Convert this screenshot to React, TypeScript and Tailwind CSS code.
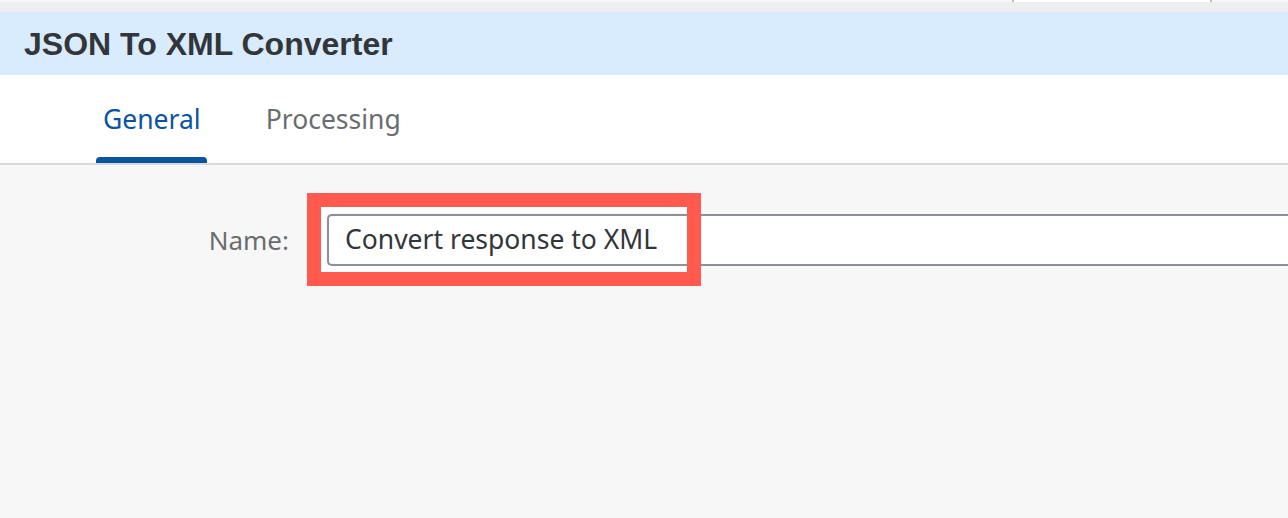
import React from "react";

const tabs = [
  { label: "General", active: true },
  { label: "Processing", active: false },
];

export default function App() {
  return (
    <div className="w-[1288px] h-[518px] overflow-hidden bg-[#f7f7f7] flex flex-col" style={{ fontFamily: '"Noto Sans", "Open Sans", sans-serif' }}>
      {/* browser strip */}
      <div className="h-[12px] bg-[#edeef0] flex flex-col shrink-0">
        <div className="h-[2px] bg-[#f6f6f7] flex">
          <div className="ml-[1012px] w-[200px] h-[2px] border-x-2 border-[#b9bbbe] bg-white" />
        </div>
      </div>

      {/* title bar */}
      <div className="h-[63px] bg-[#d8ecfd] flex items-center px-[24px] shrink-0">
        <h1 className="text-[32px] font-bold text-[#32363a]" style={{ fontFamily: '"Liberation Sans", Arial, sans-serif' }}>
          JSON To XML Converter
        </h1>
      </div>

      {/* tabs */}
      <div className="h-[90px] bg-white border-b-2 border-[#d9d9d9] flex items-end pl-[96px] shrink-0">
        {tabs.map((tab) => (
          <div key={tab.label} className="flex flex-col items-center mr-[52px]">
            <div className={`h-[82px] pt-[8px] flex items-center pl-[7px] pr-[6px] text-[26.5px] ${tab.active ? "text-[#0a55a3]" : "text-[#6a6d70]"}`}>
              {tab.label}
            </div>
            <div className={`h-[6px] w-full rounded-t-[4px] ${tab.active ? "bg-[#0854a0]" : "bg-transparent"}`} />
          </div>
        ))}
      </div>

      {/* form */}
      <div className="relative flex-1">
        <div className="flex items-center pt-[49px]">
          <label className="w-[289px] text-right text-[26px] text-[#6a6d70]">Name:</label>
          <div className="ml-[38px] flex-1 h-[52px] bg-white border-2 border-r-0 border-[#89919a] rounded-l-[5px] flex items-center pl-[16px] text-[26.5px] text-[#32363a]">
            Convert response to XML
          </div>
        </div>

        {/* highlight annotation */}
        <div className="absolute left-[307px] top-[28px] w-[394px] h-[93px] border-[14px] border-[#ff5a4d]">
          <div className="w-full h-full border-l-[5px] border-t-[6px] border-b-[6px] border-white" />
        </div>
      </div>
    </div>
  );
}
